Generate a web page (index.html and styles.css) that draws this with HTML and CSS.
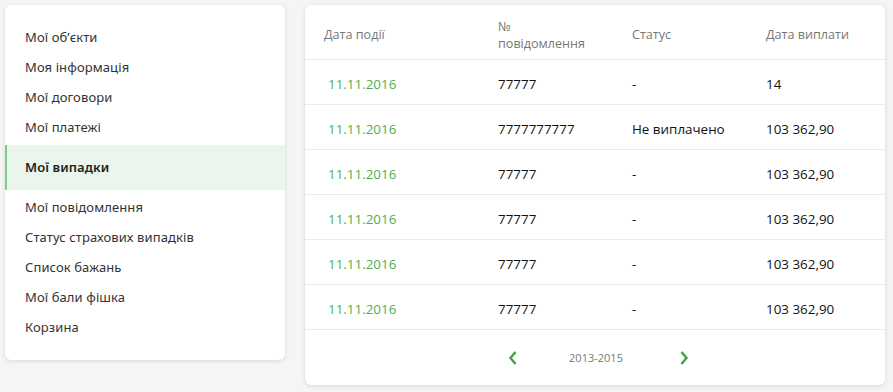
FILE: index.html
```html
<!DOCTYPE html>
<html lang="uk">
<head>
  <meta charset="UTF-8">
  <title>Мої випадки</title>
  <link rel="stylesheet" href="styles.css">
</head>
<body>
  <div class="page">
    <!-- Side menu -->
    <nav class="menu">
      <a class="menu-item">Мої об’єкти</a>
      <a class="menu-item">Моя інформація</a>
      <a class="menu-item">Мої договори</a>
      <a class="menu-item">Мої платежі</a>
      <a class="menu-item active">Мої випадки</a>
      <a class="menu-item">Мої повідомлення</a>
      <a class="menu-item">Статус страхових випадків</a>
      <a class="menu-item">Список бажань</a>
      <a class="menu-item">Мої бали фішка</a>
      <a class="menu-item">Корзина</a>
    </nav>

    <!-- Cases table -->
    <section class="cases">
      <div class="row head">
        <div>Дата події</div>
        <div>№<br>повідомлення</div>
        <div>Статус</div>
        <div>Дата виплати</div>
      </div>
      <div class="row">
        <div class="date">11.11.2016</div>
        <div>77777</div>
        <div>-</div>
        <div>14</div>
      </div>
      <div class="row">
        <div class="date">11.11.2016</div>
        <div>7777777777</div>
        <div>Не виплачено</div>
        <div>103 362,90</div>
      </div>
      <div class="row">
        <div class="date">11.11.2016</div>
        <div>77777</div>
        <div>-</div>
        <div>103 362,90</div>
      </div>
      <div class="row">
        <div class="date">11.11.2016</div>
        <div>77777</div>
        <div>-</div>
        <div>103 362,90</div>
      </div>
      <div class="row">
        <div class="date">11.11.2016</div>
        <div>77777</div>
        <div>-</div>
        <div>103 362,90</div>
      </div>
      <div class="row">
        <div class="date">11.11.2016</div>
        <div>77777</div>
        <div>-</div>
        <div>103 362,90</div>
      </div>

      <div class="pager">
        <button class="arrow prev" aria-label="prev">
          <svg width="10" height="16" viewBox="0 0 10 16"><path d="M7.5 2 L2.5 8 L7.5 14" fill="none" stroke="#43a047" stroke-width="2.4"/></svg>
        </button>
        <span class="years">2013-2015</span>
        <button class="arrow next" aria-label="next">
          <svg width="10" height="16" viewBox="0 0 10 16"><path d="M2.5 2 L7.5 8 L2.5 14" fill="none" stroke="#43a047" stroke-width="2.4"/></svg>
        </button>
      </div>
    </section>
  </div>
</body>
</html>
```

FILE: styles.css
```css
body {
  margin: 0;
  background-color: #f5f5f5;
  font-family: "Open Sans", Arial, sans-serif;
  color: #1a1a1a;
}

.page {
  display: flex;
  align-items: flex-start;
  gap: 20px;
  padding: 5px;
}

.menu {
  width: 280px;
  background-color: #fff;
  border-radius: 6px;
  box-shadow: 0 1px 4px rgba(0, 0, 0, 0.12);
  padding: 17px 0 18px;
  display: flex;
  flex-direction: column;
}

.menu-item {
  height: 30px;
  line-height: 30px;
  padding-left: 20px;
  font-family: "Noto Sans", sans-serif;
  font-size: 13px;
  color: #333;
  letter-spacing: 0.1px;
}

.menu-item.active {
  height: 45px;
  line-height: 45px;
  margin: 3px 0 2px;
  padding-left: 18px;
  border-left: 2px solid #7dcb86;
  background-color: #eaf5eb;
  color: #222;
  font-weight: 600;
}

.cases {
  width: 580px;
  background-color: #fff;
  border-radius: 6px;
  box-shadow: 0 1px 5px rgba(0, 0, 0, 0.12);
}

.row {
  display: grid;
  grid-template-columns: 174px 134px 134px 1fr;
  align-items: center;
  box-sizing: border-box;
  height: 45px;
  padding: 4px 0 0 19px;
  border-bottom: 1px solid #ebebeb;
  font-size: 13.4px;
  color: #111;
}

.row.head {
  height: 55px;
  padding-top: 5px;
  font-size: 12.6px;
  color: #777;
  line-height: 17px;
}

.date {
  color: #4caf50;
  padding-left: 4px;
}

.pager {
  display: flex;
  justify-content: center;
  align-items: center;
  height: 55px;
}

.arrow {
  border: none;
  background: none;
  padding: 0;
  display: flex;
}

.arrow.prev {
  margin: 0 51px 0 63px;
}

.arrow.next {
  margin: 0 56px 0 56px;
}

.years {
  font-size: 11px;
  color: #777;
}
```
